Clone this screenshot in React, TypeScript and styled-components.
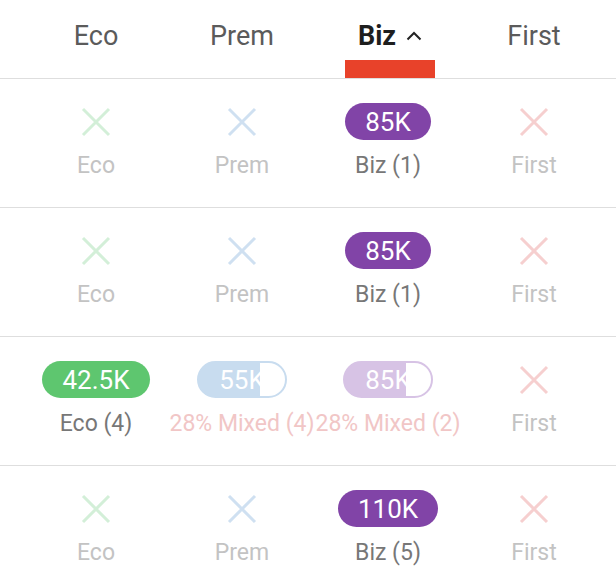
import React from "react";
import styled, { createGlobalStyle } from "styled-components";

const Global = createGlobalStyle`
  html, body { margin: 0; padding: 0; background: #fff; }
  body { font-family: Roboto, "Liberation Sans", sans-serif; }
`;

const Page = styled.div`
  width: 616px;
  background: #fff;
`;

const Grid = styled.div<{ $h: number }>`
  display: grid;
  grid-template-columns: repeat(4, 146px);
  padding: 0 9px 0 23px;
  height: ${(p) => p.$h}px;
  border-bottom: 1.5px solid #dedede;
  box-sizing: border-box;
`;

const HeadCell = styled.div<{ $active?: boolean }>`
  position: relative;
  display: flex;
  align-items: center;
  justify-content: center;
  gap: 10px;
  padding-bottom: 6px;
  font-size: 27px;
  font-weight: ${(p) => (p.$active ? 700 : 400)};
  color: ${(p) => (p.$active ? "#1e1e1e" : "#5b5b5b")};
  padding-left: ${(p) => (p.$active ? "4px" : "0")};
`;

const Underline = styled.div`
  position: absolute;
  left: 50%;
  bottom: 0;
  transform: translateX(-50%);
  margin-left: 2px;
  width: 90px;
  height: 18px;
  background: #e8422a;
`;

const Cell = styled.div`
  display: flex;
  flex-direction: column;
  align-items: center;
  padding-top: 24px;
  gap: 12px;
`;

const Slot = styled.div`
  height: 37px;
  display: flex;
  align-items: center;
  justify-content: center;
`;

const Badge = styled.div<{ $bg: string; $mixed?: boolean }>`
  height: 37px;
  box-sizing: border-box;
  padding: 0 20px;
  border-radius: 19px;
  display: flex;
  align-items: center;
  justify-content: center;
  color: #fff;
  font-size: 26px;
  line-height: 1;
  white-space: nowrap;
  background: ${(p) =>
    p.$mixed ? `linear-gradient(to right, ${p.$bg} 71%, #fff 71%)` : p.$bg};
  border: ${(p) => (p.$mixed ? `2px solid ${p.$bg}` : "none")};
`;

const Label = styled.div<{ $color: string }>`
  font-size: 23px;
  line-height: 28px;
  color: ${(p) => p.$color};
  white-space: nowrap;
`;

const Cross = ({ color }: { color: string }) => (
  <svg width="32" height="32" viewBox="0 0 32 32">
    <path d="M3 3 L29 29 M29 3 L3 29" stroke={color} strokeWidth="3" fill="none" />
  </svg>
);

const Caret = () => (
  <svg width="16" height="10" viewBox="0 0 16 10">
    <path d="M1.5 8.5 L8 2 L14.5 8.5" stroke="#222" strokeWidth="2" fill="none" />
  </svg>
);

type CellData =
  | { kind: "x"; color: string; label: string }
  | { kind: "badge"; bg: string; value: string; label: string; labelColor: string; mixed?: boolean };

const cols = { eco: "#d3efd8", prem: "#cfe0f1", first: "#f6cfcf" };
const faded = "#c3c3c3";
const purple = "#8144a7";

const rows: CellData[][] = [
  [
    { kind: "x", color: cols.eco, label: "Eco" },
    { kind: "x", color: cols.prem, label: "Prem" },
    { kind: "badge", bg: purple, value: "85K", label: "Biz (1)", labelColor: "#777" },
    { kind: "x", color: cols.first, label: "First" },
  ],
  [
    { kind: "x", color: cols.eco, label: "Eco" },
    { kind: "x", color: cols.prem, label: "Prem" },
    { kind: "badge", bg: purple, value: "85K", label: "Biz (1)", labelColor: "#777" },
    { kind: "x", color: cols.first, label: "First" },
  ],
  [
    { kind: "badge", bg: "#5ec66f", value: "42.5K", label: "Eco (4)", labelColor: "#777" },
    { kind: "badge", bg: "#c8dcef", value: "55K", label: "28% Mixed (4)", labelColor: "#f1c6c6", mixed: true },
    { kind: "badge", bg: "#d7c3e5", value: "85K", label: "28% Mixed (2)", labelColor: "#f1c6c6", mixed: true },
    { kind: "x", color: cols.first, label: "First" },
  ],
  [
    { kind: "x", color: cols.eco, label: "Eco" },
    { kind: "x", color: cols.prem, label: "Prem" },
    { kind: "badge", bg: purple, value: "110K", label: "Biz (5)", labelColor: "#777" },
    { kind: "x", color: cols.first, label: "First" },
  ],
];

export default function App() {
  return (
    <Page>
      <Global />
      <Grid $h={79}>
        <HeadCell>Eco</HeadCell>
        <HeadCell>Prem</HeadCell>
        <HeadCell $active>
          Biz <Caret />
          <Underline />
        </HeadCell>
        <HeadCell>First</HeadCell>
      </Grid>
      {rows.map((r, i) => (
        <Grid key={i} $h={129}>
          {r.map((c, j) => (
            <Cell key={j}>
              <Slot>
                {c.kind === "x" ? (
                  <Cross color={c.color} />
                ) : (
                  <Badge $bg={c.bg} $mixed={c.mixed}>
                    {c.value}
                  </Badge>
                )}
              </Slot>
              <Label $color={c.kind === "x" ? faded : c.labelColor}>{c.label}</Label>
            </Cell>
          ))}
        </Grid>
      ))}
    </Page>
  );
}
